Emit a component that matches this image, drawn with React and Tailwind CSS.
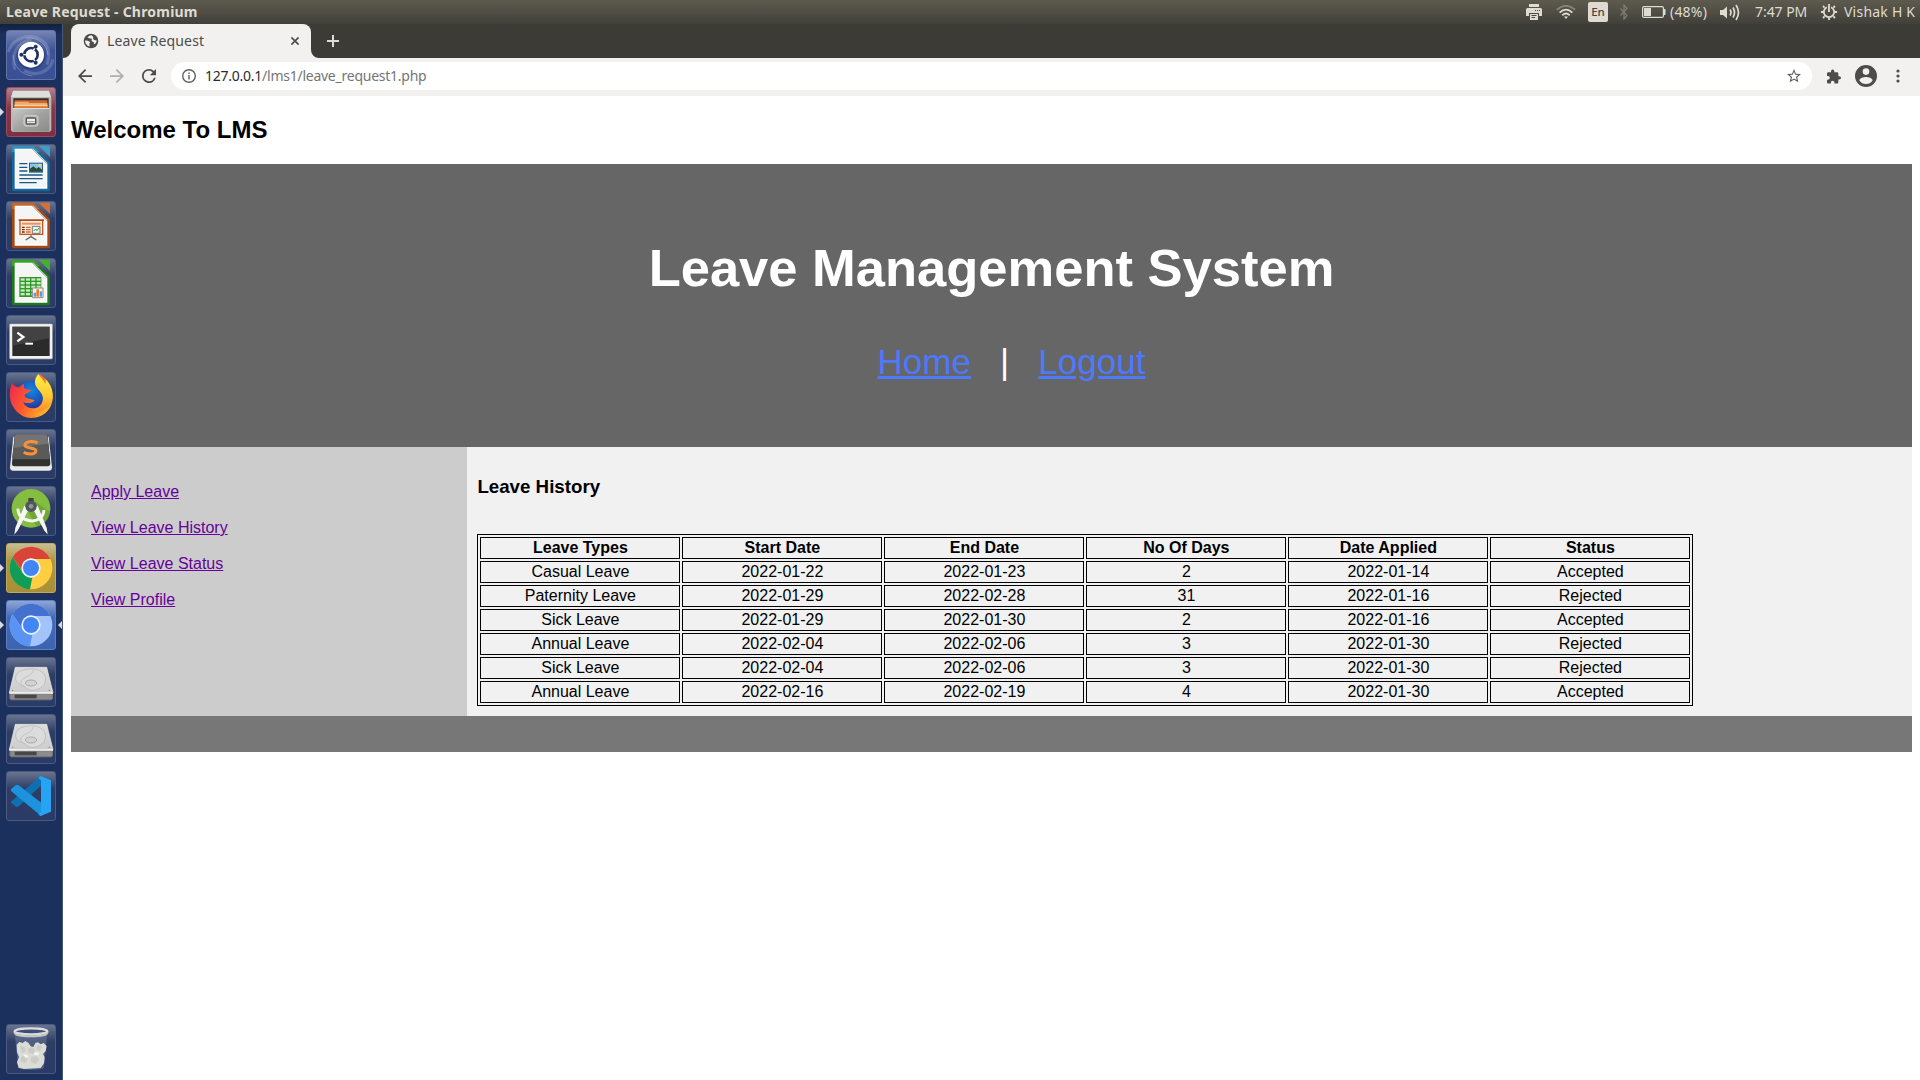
import React from "react";

const rows = [
  ["Casual Leave", "2022-01-22", "2022-01-23", "2", "2022-01-14", "Accepted"],
  ["Paternity Leave", "2022-01-29", "2022-02-28", "31", "2022-01-16", "Rejected"],
  ["Sick Leave", "2022-01-29", "2022-01-30", "2", "2022-01-16", "Accepted"],
  ["Annual Leave", "2022-02-04", "2022-02-06", "3", "2022-01-30", "Rejected"],
  ["Sick Leave", "2022-02-04", "2022-02-06", "3", "2022-01-30", "Rejected"],
  ["Annual Leave", "2022-02-16", "2022-02-19", "4", "2022-01-30", "Accepted"],
];
const headings = ["Leave Types", "Start Date", "End Date", "No Of Days", "Date Applied", "Status"];
const links = ["Apply Leave", "View Leave History", "View Leave Status", "View Profile"];

/* ---------- launcher icons, all drawn on a 150 x 150 grid ---------- */

function Dash() {
  return (
    <>
      <g fill="none" stroke="#c3cdea" strokeLinecap="round">
        <path d="M8 62C22 24 76 4 112 34c18 18 20 40 12 66" strokeWidth="9" opacity=".25" />
        <path d="M26 116C16 74 30 38 72 30" strokeWidth="9" opacity=".22" />
        <path d="M140 92c-10 34-50 48-82 32" strokeWidth="10" opacity=".22" />
        <path d="M62 24c34-4 62 20 64 50" strokeWidth="3" opacity=".4" />
        <path d="M22 76c0 34 24 58 56 62" strokeWidth="3" opacity=".35" />
      </g>
      <circle cx="75" cy="77" r="42" fill="#13224f" opacity=".35" />
      <circle cx="75" cy="74" r="39" fill="#fff" />
      <circle cx="75" cy="74" r="20" fill="none" stroke="#1f3263" strokeWidth="8" />
      <g stroke="#fff" strokeWidth="4">
        <path d="M75 74L40 74M75 74L93 43M75 74L93 105" />
      </g>
      <circle cx="75" cy="74" r="15" fill="#fff" />
      <g fill="#1f3263">
        <circle cx="46" cy="74" r="6" />
        <circle cx="89" cy="50" r="6" />
        <circle cx="89" cy="98" r="6" />
      </g>
    </>
  );
}

function Files() {
  return (
    <>
      <path d="M20 12h110l6 22v96l-6 5H20l-5-5V34z" fill="#b9b9b6" />
      <path d="M22 11h106l7 19H15z" fill="#dededc" />
      <path d="M22 34h106v32H22z" fill="#3a2c26" />
      <path d="M26 40h98v24H26z" fill="#c9682f" />
      <path d="M26 44h40l4 4h54v18H26z" fill="#f3a867" />
      <path d="M25 53h100v5H25z" fill="#f8cf9d" />
      <path d="M25 58h100v6H25z" fill="#d9782f" />
      <path d="M20 63h110v71H20z" fill="url(#steel)" />
      <path d="M20 63h110v3H20z" fill="#ddd" />
      <rect x="54" y="86" width="42" height="31" rx="6" fill="#b5b5b3" stroke="#d2d2d0" strokeWidth="3" />
      <rect x="61" y="93" width="28" height="18" rx="3" fill="#efefee" stroke="#555" strokeWidth="4" />
      <path d="M64 104h22" stroke="#999" strokeWidth="3" />
    </>
  );
}

function Sheet({ dark, mid, children }) {
  return (
    <>
      <path d="M22 5h60l50 50v82q0 5-5 5H22q-4 0-4-5V9q0-4 4-4z" fill={dark} />
      <path d="M22 5h60l20 20H18V9q0-4 4-4z" fill={mid} opacity=".75" />
      <path d="M98 5h30q4 0 4 4v30z" fill={mid} />
      <path d="M26 14h51l47 47v73H26z" fill="#fff" />
      <path d="M30 18h46l44 44v68H30z" fill="#f3f3f3" opacity=".8" />
      <path d="M77 14l47 47V56L82 14z" fill="#cfcfcf" />
      {children}
    </>
  );
}

const Writer = () => (
  <Sheet dark="#12679c" mid="#3d9cca">
    <g fill="#155a8a">
      <path d="M40 57h24v4H40zM40 68h24v4H40zM40 79h24v4H40zM40 91h70v4H40zM40 102h70v4H40zM40 114h52v4H40z" />
    </g>
    <path d="M69 56h42v30H69z" fill="#1f5f94" />
    <path d="M72 59h36v24H72z" fill="#8fc3e8" />
    <path d="M72 83V74l10-7 9 7 7-5 10 8v6z" fill="#2b4a33" />
    <circle cx="102" cy="64" r="4" fill="#ffd95a" />
  </Sheet>
);

const Impress = () => (
  <Sheet dark="#a8470f" mid="#cf7138">
    <path d="M42 58h68v42H42z" fill="#fbe9dc" stroke="#c4551c" strokeWidth="4" />
    <path d="M38 55h76v5H38z" fill="#b64a15" />
    <path d="M48 65h56v6H48z" fill="#e2936a" />
    <path d="M48 77h8v4h-8zM48 84h8v4h-8zM48 91h8v4h-8z" fill="#6b2c10" />
    <path d="M60 77h14v4H60zM60 84h14v4H60zM60 91h14v4H60z" fill="#d96a2d" />
    <path d="M79 76h23v21H79z" fill="#eef4ec" stroke="#777" strokeWidth="3" />
    <path d="M83 90l6-6 4 5 7-9" fill="none" stroke="#30a040" strokeWidth="3" />
    <path d="M75 103v6M75 107l-16 10M75 107l16 10" stroke="#666" strokeWidth="4" fill="none" />
  </Sheet>
);

const Calc = () => (
  <Sheet dark="#1d7a1a" mid="#43b12f">
    <path d="M40 57h66v60H40z" fill="#2f9628" />
    <g fill="#c9ebc0">
      {[61, 72, 83, 94, 105].map((y) =>
        [44, 60, 76, 92].map((x) => <rect key={`${x}-${y}`} x={x} y={y} width="12" height="7" />)
      )}
    </g>
    <path d="M79 90h32v29H79z" fill="#f4f4f4" stroke="#888" strokeWidth="3" />
    <path d="M83 104h7v12h-7z" fill="#5a9bd8" />
    <path d="M91 94h8v22h-8z" fill="#ef7b24" />
    <path d="M101 100h7v16h-7z" fill="#5a9bd8" />
  </Sheet>
);

const Terminal = () => (
  <>
    <rect x="10" y="26" width="130" height="107" rx="4" fill="#c4c4c1" />
    <rect x="12" y="28" width="126" height="102" rx="3" fill="#f0f0ee" />
    <rect x="19" y="35" width="112" height="88" fill="#2a2b2a" />
    <path d="M19 35h112v34L19 92z" fill="#555" opacity=".55" />
    <path d="M34 53l18 13-18 13" fill="none" stroke="#fff" strokeWidth="7" />
    <path d="M58 86h23" stroke="#fff" strokeWidth="6" />
  </>
);

const Firefox = () => (
  <>
    <circle cx="76" cy="74" r="48" fill="url(#ffblue)" />
    <path
      d="M18 32c-10 26-8 52 2 70 12 22 34 36 56 36 38 0 64-28 64-62 0-26-12-48-38-70-14 12-16 30-8 42 10 12 20 22 16 36-4 20-20 28-36 24-12-2-20-10-22-18 8 4 18 6 34-4-4-4-16-4-24-8-6-2-8-8-4-12 4-2 14-6 18-12-8 0-18-2-22-6l0-12c-6 2-10 6-14 10-8 0-18-4-22-14z"
      fill="url(#fffire)"
    />
    <path d="M97 6c-14 16-12 32-2 44 10 10 20 24 16 38-4 18-18 28-34 26 26 14 60-6 63-38 2-28-12-46-22-56 2 6 2 12 0 16-6-12-14-20-21-30z" fill="url(#ffyellow)" />
  </>
);

const Sublime = () => (
  <>
    <path d="M22 23h106l10 92q0 10-8 10H20q-8 0-8-10z" fill="#e9e9e7" />
    <path d="M26 20q0-4 5-4h88q5 0 6 4l8 82q0 10-8 10H26q-9 0-8-10z" fill="#323231" />
    <path d="M27 20q0-4 5-4h87q4 0 5 4l7 62q0 9-6 9H26q-8 0-7-9z" fill="#5a5a59" />
    <path d="M27 20q0-4 5-4h87q4 0 5 4l3 24L24 56z" fill="#8a8a8a" opacity=".55" />
    <path
      d="M95 42c-10-6-34-7-38 5-3 13 34 7 33 19-2 12-26 11-37 4"
      fill="none"
      stroke="#f5923b"
      strokeWidth="9"
    />
  </>
);

const Studio = () => (
  <>
    <circle cx="75" cy="67" r="58" fill="#84bd40" />
    <path d="M84 44l48 34c-4 24-18 38-40 44L66 76z" fill="#6aa236" opacity=".8" />
    <path d="M65 72l-31 60-6 7 2-13 26-64zM85 72l31 60 6 7-2-13-26-64z" fill="#f6f6f6" stroke="#f6f6f6" strokeWidth="4" />
    <path d="M36 68c-2 42 74 54 78 4" fill="none" stroke="#f6f6f6" strokeWidth="9" />
    <path d="M67 36h16v12H67z" fill="#3f4447" />
    <circle cx="75" cy="61" r="17" fill="#50565a" />
    <circle cx="75" cy="61" r="7" fill="#8c959d" />
  </>
);

function Browser({ top, left, right, ring }) {
  return (
    <>
      <circle cx="75" cy="75" r="64" fill={right} />
      <path d="M19.6 43A64 64 0 0 1 133 48H75L52 90z" fill={top} />
      <path d="M19.6 43L51 90c6 10 14 14 28 13L72 139A64 64 0 0 1 19.6 43z" fill={left} />
      <circle cx="75" cy="75" r="29" fill={ring} />
      <circle cx="75" cy="75" r="24" fill="#4285f4" />
    </>
  );
}

const Disk = () => (
  <>
    <path d="M10 102h131v22l-5 6H15l-5-6z" fill="#777" />
    <path d="M28 31h94l19 76H10z" fill="url(#platter)" stroke="#eee" strokeWidth="2" />
    <path d="M10 106h131v4H10z" fill="#f5f5f5" />
    <path d="M14 112h123v14H14z" fill="#8c8c8b" />
    <path d="M26 113h66v11H26z" fill="#303030" opacity=".75" />
    <path d="M44 84c-22-8-20-36 4-44 30-10 64-4 70 20 4 24-14 38-38 40-18 0-20-14-36-16z" fill="#dcdcdc" stroke="#b4b4b4" strokeWidth="2" />
    <path d="M82 40c-4 16-24 18-34 28-8 10-2 18 8 22" fill="none" stroke="#bdbdbd" strokeWidth="2.5" />
    <ellipse cx="75" cy="78" rx="17" ry="9" fill="#d2d2d2" stroke="#aaa" strokeWidth="3" />
    <circle cx="20" cy="100" r="2" fill="#777" />
    <circle cx="130" cy="100" r="2" fill="#777" />
  </>
);

const Code = () => (
  <>
    <path d="M15 95l16 13 7-2 68-63V15L98 20 15 92z" fill="#0f6fb4" />
    <path d="M15 54l16-13 7 2 68 52v40l-8-6L15 60z" fill="#1c93dc" />
    <path d="M104 15l31 13v94l-31 13q-5-1-7-6l8-6V28l-8-6q2-6 7-7z" fill="#27a3f3" />
  </>
);

const Trash = () => (
  <>
    <path d="M26 24l10 106q2 8 39 8t39-8l10-106z" fill="#8492b4" opacity=".38" />
    <path d="M32 62l8-8 10 3 8-6 10 6 6 10 8 2 6-12 8-2 8 6 9-4 9 9-3 16-8 8 5 10-2 18-10 14-50 3-16-4-5-16 6-16-6-14z" fill="#dcdcd6" />
    <path d="M42 66l14 4 4 12-12 4zM66 74l12-4 10 8-6 12-14-2zM94 62l14 6-6 14-12-6zM44 100l12-4 10 10-8 10-14-2zM76 98l16-2 8 12-12 12-14-6z" fill="#c2c2bb" opacity=".6" />
    <path d="M52 90l10 2 6 6-10 4zM86 84l14 2-4 8-12-2z" fill="#f4f4f0" />
    <ellipse cx="75" cy="22" rx="50" ry="10" fill="#3c4f7c" />
    <ellipse cx="75" cy="22" rx="49" ry="9" fill="none" stroke="#dcdcd9" strokeWidth="7" />
    <path d="M23 22q2 12 52 12t52-12v5q-4 13-52 13T23 27z" fill="#c9c9c5" />
  </>
);

const plain = "bg-linear-to-b from-[#69748f] via-[#2e3d64] via-35% to-[#2a3b66] border-[#4a5a82]";
const apps = [
  { id: "dash", el: <Dash />, tile: "bg-linear-to-b from-[#7684b3] via-[#3d5396] via-40% to-[#3a5096] border-[#6474a8]" },
  { id: "files", el: <Files />, tile: "bg-linear-to-b from-[#b08390] via-[#853848] via-40% to-[#7f3040] border-[#9a4c5a]", left: true },
  { id: "writer", el: <Writer />, tile: plain },
  { id: "impress", el: <Impress />, tile: plain },
  { id: "calc", el: <Calc />, tile: plain },
  { id: "terminal", el: <Terminal />, tile: plain },
  { id: "firefox", el: <Firefox />, tile: plain },
  { id: "sublime", el: <Sublime />, tile: plain },
  { id: "studio", el: <Studio />, tile: plain },
  {
    id: "chrome",
    el: <Browser top="#d8443a" left="#109d58" right="#ffcd40" ring="#f4f4f4" />,
    tile: "bg-linear-to-b from-[#c8bd92] via-[#ae9640] via-35% to-[#a98f37] border-[#bfa95c]",
    left: true,
  },
  {
    id: "chromium",
    el: <Browser top="#4470cf" left="#5b93f5" right="#a3c3fb" ring="#eef3ff" />,
    tile: "bg-linear-to-b from-[#8fa6d6] via-[#4169b5] via-35% to-[#3c65b1] border-[#5f80c0]",
    left: true,
    right: true,
  },
  { id: "disk1", el: <Disk />, tile: plain },
  { id: "disk2", el: <Disk />, tile: plain },
  { id: "code", el: <Code />, tile: plain },
];

function Tile({ el, tile, left, right }) {
  return (
    <div className="relative flex h-[50px] w-[62px] shrink-0 pl-[6px]">
      {left && (
        <svg className="absolute top-[21px] left-0" width="4" height="8" viewBox="0 0 4 8">
          <path d="M0 0l4 4-4 4z" fill="#d8dbe0" />
        </svg>
      )}
      <div className={`h-[50px] w-[50px] rounded-[3px] border ${tile}`}>
        <svg className="-mt-px -ml-px block" width="50" height="50" viewBox="0 0 150 150">
          {el}
        </svg>
      </div>
      {right && (
        <svg className="absolute top-[21px] right-0" width="4" height="8" viewBox="0 0 4 8">
          <path d="M4 0L0 4l4 4z" fill="#d8dbe0" />
        </svg>
      )}
    </div>
  );
}

function Launcher() {
  return (
    <aside className="flex w-[63px] shrink-0 flex-col justify-between border-r border-[#465877] bg-linear-to-b from-[#122040] to-[#1b305c] to-1% pt-[6px] pb-[6px]">
      <svg className="absolute" width="0" height="0">
        <defs>
          <linearGradient id="steel" x1="0" y1="0" x2="1" y2="1">
            <stop offset="0" stopColor="#c9c9c7" />
            <stop offset=".5" stopColor="#a3a3a1" />
            <stop offset="1" stopColor="#8a8a88" />
          </linearGradient>
          <linearGradient id="platter" x1="0" y1="0" x2="0" y2="1">
            <stop offset="0" stopColor="#dcdcdc" />
            <stop offset="1" stopColor="#cdcdcd" />
          </linearGradient>
          <radialGradient id="ffblue" cx=".5" cy=".3" r=".7">
            <stop offset="0" stopColor="#1486e0" />
            <stop offset=".6" stopColor="#1b4fb4" />
            <stop offset="1" stopColor="#3a1d7a" />
          </radialGradient>
          <linearGradient id="fffire" x1=".1" y1=".2" x2=".95" y2=".6">
            <stop offset="0" stopColor="#ee2e4e" />
            <stop offset=".45" stopColor="#ff5a2c" />
            <stop offset="1" stopColor="#ffb52a" />
          </linearGradient>
          <linearGradient id="ffyellow" x1="0" y1="0" x2="0" y2="1">
            <stop offset="0" stopColor="#fff04a" />
            <stop offset=".6" stopColor="#ffc832" />
            <stop offset="1" stopColor="#ff8a26" />
          </linearGradient>
        </defs>
      </svg>
      <div className="flex flex-col gap-[7px]">
        {apps.map((a) => (
          <Tile key={a.id} {...a} />
        ))}
      </div>
      <Tile el={<Trash />} tile={plain} />
    </aside>
  );
}

/* ---------- desktop panel ---------- */

function Panel() {
  return (
    <div className="flex h-[24px] items-center bg-linear-to-b from-[#5d5b4e] via-[#504e45] via-50% to-[#403f39] pl-[6px] text-[#dfdbd2]">
      <span className="flex-1 text-[14px] leading-[24px] font-bold tracking-[0.210px] whitespace-nowrap">
        Leave Request - Chromium
      </span>
      <div className="flex h-[24px] w-[394px] items-center text-[14px] leading-[24px] whitespace-nowrap">
        <svg className="mr-[14px] shrink-0" width="16" height="16" viewBox="0 0 16 16" fill="#dfdbd2">
          <path d="M3 0h10v3H3zM1.500 4h13q1.500 0 1.500 1.500V12h-3V9H3v3H0V5.500Q0 4 1.500 4z" />
          <path d="M4 10h8v6H4z" />
          <path d="M5.500 11.500h5M5.500 13.500h3.500M9 6.500h1M11 6.500h1M13 6.500h1" stroke="#4a4840" />
        </svg>
        <svg className="mr-[12px] shrink-0" width="20" height="14" viewBox="0 0 20 14" fill="none" stroke="#dfdbd2" strokeWidth="1.800">
          <path d="M.8 4.800Q10-3.300 19.200 4.800" stroke="#85837a" />
          <path d="M3.600 7.600Q10 1.600 16.400 7.600M6.300 10.300Q10 6.800 13.700 10.300" />
          <path d="M8 11.600h4L10 13.900z" fill="#dfdbd2" stroke="none" />
        </svg>
        <span className="mr-[12px] flex h-[20px] w-[20px] shrink-0 items-center justify-center rounded-[2px] bg-[#dfdbd2] text-[11.500px] leading-[20px] font-medium text-[#45433c]">
          En
        </span>
        <svg className="mr-[14px] shrink-0" width="8" height="16" viewBox="0 0 8 16" fill="none" stroke="#7d7b72" strokeWidth="1.300">
          <path d="M.5 4.500l6.500 7L4 15V1l3 3.500-6.500 7" />
        </svg>
        <svg className="mr-[4px] shrink-0" width="24" height="12" viewBox="0 0 24 12">
          <rect x=".6" y=".6" width="20.800" height="10.800" rx="1.500" fill="none" stroke="#dfdbd2" strokeWidth="1.200" />
          <path d="M22 3h1.500v6H22z" fill="#dfdbd2" />
          <path d="M2 2h7v8H2z" fill="#dfdbd2" />
        </svg>
        <span className="w-[50px] shrink-0 tracking-[0.200px]">(48%)</span>
        <svg className="mr-[15px] shrink-0" width="20" height="17" viewBox="0 0 20 17" fill="none" stroke="#dfdbd2" strokeWidth="1.700">
          <path d="M0 6h3l4-3.500v12L3 11H0z" fill="#dfdbd2" stroke="none" />
          <path d="M10 5.500Q12 8.500 10 11.500M13 3.500Q16 8.500 13 13.500M16 1Q21 8.500 16 16" />
        </svg>
        <span className="w-[66px] shrink-0 tracking-[-0.050px]">7:47 PM</span>
        <svg className="mr-[7px] shrink-0" width="16" height="16" viewBox="0 0 16 16" fill="none" stroke="#dfdbd2">
          <path d="M5.900 3.200a5.200 5.200 0 1 0 4.200 0" strokeWidth="1.800" />
          <path d="M8 0v8" strokeWidth="1.800" />
          <path d="M2 2l1.600 1.600M14 2l-1.600 1.600M0 8h2.500M16 8h-2.500M2 14l1.600-1.600M14 14l-1.600-1.600M8 16v-2.500" strokeWidth="1.800" />
        </svg>
        <span className="tracking-[0.220px]">Vishak H K</span>
      </div>
    </div>
  );
}

/* ---------- browser chrome ---------- */

function TabStrip() {
  return (
    <div className="flex h-[34px] bg-[#3c3b35]">
      <div className="flex w-[8px] items-end bg-[#3c3b35]">
        <svg width="8" height="8" viewBox="0 0 8 8">
          <path d="M8 0a8 8 0 0 1-8 8h8z" fill="#f2f1f0" />
        </svg>
      </div>
      <div className="flex h-[34px] w-[240px] items-center rounded-t-[8px] bg-[#f2f1f0] pl-[12px] text-[#4c4c4c]">
        <svg className="mr-[8px]" width="16" height="16" viewBox="0 0 16 16">
          <circle cx="8" cy="8" r="7.300" fill="#4c4c4c" />
          <path d="M8.300 2.200c-1.800.4-3 1-3.800 2.200L7 5.500l2 .2L8.500 8l2.300 1.200.2 2c1.500-.6 2.700-2 2.600-4-1.500.1-2.800-.4-3.600-1.500.8-1 .2-2.500-1.700-3.500zM2 7.500l3 .3 2.200 1.500-.9 1.500.4 2.700C3.700 12.800 2 10.500 2 7.500z" fill="#f2f1f0" />
        </svg>
        <span className="flex-1 text-[14px] leading-[34px] tracking-[0.150px] whitespace-nowrap">Leave Request</span>
        <svg className="mr-[12px]" width="8" height="8" viewBox="0 0 8 8" stroke="#4c4c4c" strokeWidth="1.700">
          <path d="M.4.4l7.200 7.200M7.600.4L.4 7.600" />
        </svg>
      </div>
      <div className="flex w-[8px] items-end">
        <svg width="8" height="8" viewBox="0 0 8 8">
          <path d="M0 0a8 8 0 0 0 8 8H0z" fill="#f2f1f0" />
        </svg>
      </div>
      <svg className="mt-[11px] ml-[8px]" width="12" height="12" viewBox="0 0 12 12" stroke="#dfdbd2" strokeWidth="2">
        <path d="M6 0v12M0 6h12" />
      </svg>
    </div>
  );
}

function Toolbar() {
  return (
    <div className="flex h-[38px] items-center bg-[#f2f1f0] pb-[2px] pl-[15px]">
      <svg className="mr-[18px]" width="14" height="14" viewBox="4 4 16 16" fill="#4c4c4c">
        <path d="M20 11H7.800l5.600-5.600L12 4l-8 8 8 8 1.400-1.400L7.800 13H20z" />
      </svg>
      <svg className="mr-[18px]" width="14" height="14" viewBox="4 4 16 16" fill="#b0afae">
        <path d="M12 4l-1.400 1.400 5.600 5.600H4v2h12.200l-5.600 5.600L12 20l8-8z" />
      </svg>
      <svg className="mr-[15px]" width="14" height="14" viewBox="4 4 16 16" fill="#4c4c4c">
        <path d="M17.650 6.350A7.960 7.960 0 0 0 12 4a8 8 0 1 0 7.730 10h-2.080A6 6 0 1 1 12 6c1.660 0 3.140.69 4.220 1.780L13 11h7V4z" />
      </svg>
      <div className="flex h-[28px] w-[1641px] items-center rounded-full bg-white pr-[11px] pl-[11px]">
        <svg className="mr-[9px]" width="14" height="14" viewBox="0 0 14 14" fill="#5f6062">
          <circle cx="7" cy="7" r="6.300" fill="none" stroke="#5f6062" strokeWidth="1.400" />
          <path d="M6.300 6h1.400v4.500H6.300zM6.300 3.400h1.400v1.500H6.300z" />
        </svg>
        <span className="flex-1 text-[14px] leading-[28px] tracking-[-0.250px] whitespace-nowrap text-[#757575]">
          <span className="text-[#2b2b2b]">127.0.0.1</span>/lms1/leave_request1.php
        </span>
        <svg width="14" height="14" viewBox="2 2 20 20" fill="#5f6062">
          <path d="M22 9.240l-7.190-.62L12 2 9.190 8.630 2 9.240l5.460 4.730L5.820 21 12 17.270 18.180 21l-1.630-7.030zM12 15.400l-3.760 2.270 1-4.280-3.320-2.880 4.380-.38L12 6.100l1.710 4.040 4.380.38-3.320 2.880 1 4.280z" />
        </svg>
      </div>
      <svg className="ml-[15px]" width="14" height="15" viewBox="2 1 21 21" fill="#4c4c4c">
        <path d="M20.500 11H19V7a2 2 0 0 0-2-2h-4V3.500a2.500 2.500 0 0 0-5 0V5H4a2 2 0 0 0-2 2v3.800h1.500a2.700 2.700 0 0 1 0 5.400H2V20a2 2 0 0 0 2 2h3.800v-1.500a2.700 2.700 0 0 1 5.400 0V22H17a2 2 0 0 0 2-2v-4h1.500a2.500 2.500 0 0 0 0-5z" />
      </svg>
      <svg className="ml-[14px]" width="22" height="22" viewBox="2 2 20 20" fill="#4c4c4c">
        <path d="M12 2a10 10 0 1 0 0 20 10 10 0 0 0 0-20zm0 3a3 3 0 1 1 0 6 3 3 0 0 1 0-6zm0 14.200a7.200 7.200 0 0 1-6-3.220c.03-1.990 4-3.080 6-3.080s5.970 1.090 6 3.080a7.200 7.200 0 0 1-6 3.220z" />
      </svg>
      <svg className="ml-[19px]" width="4" height="14" viewBox="0 0 4 14" fill="#4c4c4c">
        <circle cx="2" cy="2" r="1.600" />
        <circle cx="2" cy="7" r="1.600" />
        <circle cx="2" cy="12" r="1.600" />
      </svg>
    </div>
  );
}

/* ---------- leave request page ---------- */

function Page() {
  return (
    <main className="flex-1 bg-white px-[8px] pt-[20px] font-['Liberation_Sans',Arial,sans-serif] text-black">
      <h2 className="mb-[20px] text-[24px] leading-[28px] font-bold">Welcome To LMS</h2>
      <header className="h-[283px] bg-[#666] pt-[73.600px] text-center text-[35px] text-white">
        <h1 className="text-[52.500px] leading-[60px] font-bold">Leave Management System</h1>
        <p className="mt-[44px] pl-[1px] leading-[40px] whitespace-pre">
          {"\u00a0\u00a0\u00a0\u00a0"}
          <a className="text-[#4d79ff] underline">Home</a>
          {"\u00a0\u00a0\u00a0|\u00a0\u00a0\u00a0"}
          <a className="text-[#4d79ff] underline">Logout</a>
        </p>
      </header>
      <section className="flex h-[269px]">
        <nav className="flex w-[396px] flex-col items-start gap-[18px] bg-[#ccc] pt-[36px] pl-[20px]">
          {links.map((l) => (
            <a key={l} className="text-[16px] leading-[18px] text-[#660099] underline">
              {l}
            </a>
          ))}
        </nav>
        <article className="flex-1 bg-[#f1f1f1] pt-[29px] pl-[10.400px]">
          <h3 className="mb-[37px] text-[18.720px] leading-[21px] font-bold">Leave History</h3>
          <table className="w-[1216px] table-fixed border-separate border-spacing-[2px] border border-black text-center text-[16px] leading-[18px]">
            <thead>
              <tr>
                {headings.map((h) => (
                  <th key={h} className="border border-black p-px font-bold">
                    {h}
                  </th>
                ))}
              </tr>
            </thead>
            <tbody>
              {rows.map((r, i) => (
                <tr key={i}>
                  {r.map((c, j) => (
                    <td key={j} className="border border-black p-px">
                      {c}
                    </td>
                  ))}
                </tr>
              ))}
            </tbody>
          </table>
        </article>
      </section>
      <footer className="h-[36px] bg-[#777]" />
    </main>
  );
}

export default function App() {
  return (
    <div className="flex h-[1080px] w-[1920px] flex-col overflow-hidden bg-white font-['Noto_Sans','Open_Sans',sans-serif]">
      <Panel />
      <div className="flex min-h-0 flex-1">
        <Launcher />
        <div className="flex flex-1 flex-col">
          <TabStrip />
          <Toolbar />
          <Page />
        </div>
      </div>
    </div>
  );
}
